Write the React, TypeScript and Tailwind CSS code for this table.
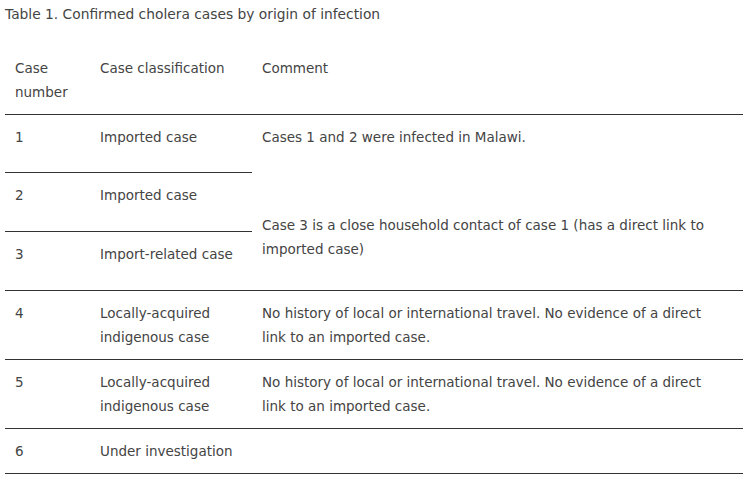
export default function App() {
  const cell = 'px-[10px] py-[10px] align-top';
  return (
    <div className="bg-white w-[747px] h-[483px] pl-[5px] pr-[4px] pt-[2px] font-['DejaVu_Sans',sans-serif] text-[13.5px] leading-[24px] text-[#444]">
      <div className="h-[24px] text-[13.8px]">Table 1. Confirmed cholera cases by origin of infection</div>
      <table className="mt-[20px] w-full border-collapse">
        <thead>
          <tr className="border-b border-[#333]">
            <th className={`${cell} w-[85px] text-left font-normal`}>Case number</th>
            <th className={`${cell} w-[162px] text-left font-normal`}>Case classification</th>
            <th className={`${cell} text-left font-normal`}>Comment</th>
          </tr>
        </thead>
        <tbody>
          <tr className="h-[58px]">
            <td className={`${cell} border-b border-[#333]`}>1</td>
            <td className={`${cell} border-b border-[#333]`}>Imported case</td>
            <td className={cell}>Cases 1 and 2 were infected in Malawi.</td>
          </tr>
          <tr className="h-[59px]">
            <td className={`${cell} border-b border-[#333]`}>2</td>
            <td className={`${cell} border-b border-[#333]`}>Imported case</td>
            <td rowSpan={2} className="px-[10px] pt-[22px] pb-[10px] align-middle border-b border-[#333]">
              Case 3 is a close household contact of case 1 (has a direct link to imported case)
            </td>
          </tr>
          <tr className="h-[59px] border-b border-[#333]">
            <td className={cell}>3</td>
            <td className={cell}>Import-related case</td>
          </tr>
          <tr className="h-[67px] border-b border-[#333]">
            <td className={cell}>4</td>
            <td className={cell}>Locally-acquired indigenous case</td>
            <td className={`${cell} pr-[30px]`}>No history of local or international travel. No evidence of a direct link to an imported case.</td>
          </tr>
          <tr className="border-b border-[#333]">
            <td className={cell}>5</td>
            <td className={cell}>Locally-acquired indigenous case</td>
            <td className={`${cell} pr-[30px]`}>No history of local or international travel. No evidence of a direct link to an imported case.</td>
          </tr>
          <tr className="border-b border-[#333]">
            <td className={cell}>6</td>
            <td className={cell}>Under investigation</td>
            <td className={cell}></td>
          </tr>
        </tbody>
      </table>
    </div>
  );
}
